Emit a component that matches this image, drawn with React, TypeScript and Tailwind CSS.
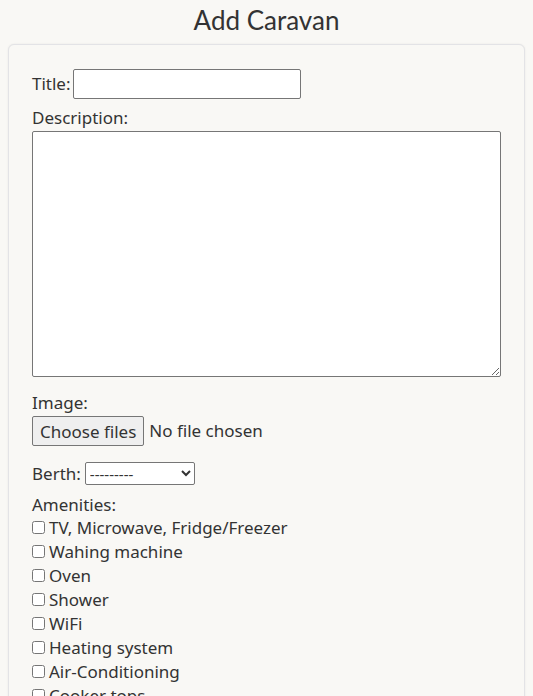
import React from "react";

const amenities = [
  "TV, Microwave, Fridge/Freezer",
  "Wahing machine",
  "Oven",
  "Shower",
  "WiFi",
  "Heating system",
  "Air-Conditioning",
  "Cooker tops",
];

export default function App() {
  return (
    <div className="min-h-[696px] bg-[#f9f8f5] text-[#333333] px-2" style={{ fontFamily: "Lato, sans-serif" }}>
      <h1 className="text-center text-[26px] leading-[40px] h-[44px]" style={{ fontFamily: "Lato, sans-serif" }}>
        Add Caravan
      </h1>
      <div
        className="bg-[#f9f8f5] border border-[#e3e3e6] rounded-md shadow-[0_0_2px_rgba(0,0,0,0.08)] px-[23px] pt-6 pb-6"
        style={{ fontFamily: "'Noto Sans', sans-serif" }}
      >
        <div className="flex items-center gap-[2px] text-[17px] h-[30px]">
          <label>Title:</label>
          <input className="w-[228px] h-[30px] bg-white border border-[#767676] rounded-[2px]" />
        </div>
        <div className="mt-[7px] text-[17px] leading-[24px]">Description:</div>
        <textarea className="block mt-[1px] w-[469px] h-[246px] bg-white border border-[#767676] rounded-[2px]" />
        <div className="mt-[14px] text-[17px] leading-[24px]">Image:</div>
        <div className="flex items-center gap-[5px] text-[17px] mt-[1px]">
          <button className="h-[30px] px-[7px] bg-[#efefef] border border-[#767676] rounded-[2px] leading-none">Choose files</button>
          <span>No file chosen</span>
        </div>
        <div className="flex items-center gap-[4px] text-[17px] mt-[15px]">
          <label>Berth:</label>
          <select className="w-[110px] h-[23px] bg-white border border-[#767676] rounded-[2px] text-[15px]">
            <option>---------</option>
          </select>
        </div>
        <div className="mt-[6px] text-[17px] leading-[24px]">Amenities:</div>
        <div className="flex flex-col -mt-[1px]">
          {amenities.map((a) => (
            <label key={a} className="flex items-center h-[24px] text-[17px]">
              <input type="checkbox" className="w-[13px] h-[13px] mr-[4px] ml-0" />
              {a}
            </label>
          ))}
        </div>
      </div>
    </div>
  );
}
